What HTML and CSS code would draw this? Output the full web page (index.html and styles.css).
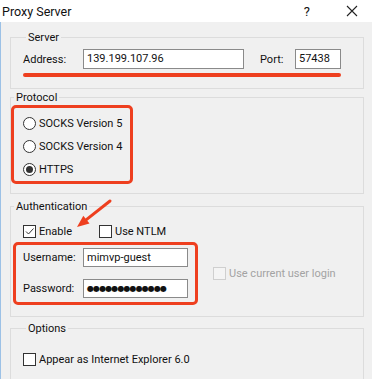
FILE: index.html
```html
<!DOCTYPE html>
<html>
<head>
<meta charset="utf-8">
<link rel="stylesheet" href="styles.css">
</head>
<body>
<div class="titlebar">
  <span class="title">Proxy Server</span>
  <span class="help">?</span>
  <svg class="close" width="12" height="12" viewBox="0 0 12 12"><path d="M1 1L11 11M11 1L1 11" stroke="#222" stroke-width="1.1" fill="none"/></svg>
</div>
<div class="window">
  <fieldset class="group server">
    <legend>Server</legend>
    <div class="row">
      <span class="lbl addr-lbl">Address:</span>
      <span class="input addr">139.199.107.96</span>
      <span class="lbl port-lbl">Port:</span>
      <span class="input port">57438</span>
    </div>
    <div class="underline"></div>
  </fieldset>

  <fieldset class="group protocol">
    <legend>Protocol</legend>
    <div class="redbox radios">
      <div class="opt"><span class="radio"></span>SOCKS Version 5</div>
      <div class="opt"><span class="radio"></span>SOCKS Version 4</div>
      <div class="opt"><span class="radio on"></span>HTTPS</div>
    </div>
  </fieldset>

  <fieldset class="group auth">
    <legend>Authentication</legend>
    <div class="checks">
      <div class="opt"><span class="check"><svg width="11" height="11" viewBox="0 0 11 11"><path d="M2 5.5L4.5 8L9.5 2.5" stroke="#333" stroke-width="1" fill="none"/></svg></span>Enable</div>
      <div class="opt ntlm"><span class="check"></span>Use NTLM</div>
    </div>
    <div class="creds-row">
      <div class="redbox creds">
        <div class="field"><span class="lbl cred-lbl">Username:</span><span class="input cred">mimvp-guest</span></div>
        <div class="field"><span class="lbl cred-lbl">Password:</span><span class="input cred pw">●●●●●●●●●●●●●</span></div>
      </div>
      <div class="opt disabled"><span class="check dis"></span>Use current user login</div>
    </div>
  </fieldset>

  <fieldset class="group options">
    <legend>Options</legend>
    <div class="opt"><span class="check"></span>Appear as Internet Explorer 6.0</div>
  </fieldset>
</div>
<svg class="arrow" width="45" height="34" viewBox="0 0 45 34"><path d="M40 3L16.4 21.6" stroke="#ee3f1f" stroke-width="3" stroke-linecap="round" fill="none"/><path d="M7 29L19.5 25.5L13.3 17.7Z" fill="#ee3f1f"/></svg>
</body>
</html>
```

FILE: styles.css
```css
* { box-sizing: border-box; }
html, body { margin: 0; padding: 0; }
body {
  width: 372px;
  height: 379px;
  overflow: hidden;
  background: #f0f0f0;
  font-family: Roboto, "Noto Sans", sans-serif;
  font-size: 11px;
  color: #111;
  position: relative;
}
.titlebar {
  height: 22px;
  background: #fff;
  display: flex;
  align-items: center;
  padding-left: 2px;
}
.title { font-size: 12.5px; color: #111; }
.help { margin-left: auto; font-size: 13px; margin-right: 36px; }
.close { margin-right: 14px; }
.window {
  border-left: 1px solid #9cc1e6;
  height: 357px;
  padding: 8px 8px 0 9px;
}
.group {
  margin: 0;
  border: 1px solid #dcdcdc;
  padding: 0;
  min-width: 0;
}
.group legend {
  padding: 1px 2px 0 2px;
  margin-left: 3px;
  line-height: 13px;
  height: 14px;
}
.lbl { display: inline-block; }
.input {
  display: inline-block;
  height: 20px;
  line-height: 17px;
  background: #fff;
  border: 1px solid #8a8a8a;
  padding: 0 3px;
  white-space: nowrap;
}
.server { padding: 5px 0 11px 12px; }
.row { display: flex; align-items: center; height: 20px; }
.addr-lbl { width: 60px; }
.addr { width: 161px; }
.port-lbl { width: 35px; margin-left: 16px; }
.port { width: 46px; }
.underline {
  margin-top: 4px;
  width: 318px;
  height: 4px;
  border-radius: 2px;
  background: #ee3f1f;
}
.redbox {
  border: 3px solid #ee3f1f;
  border-radius: 5px;
}
.protocol { margin-top: 1px; padding: 1px 0 9px 0; }
.radios {
  width: 122px;
  padding: 4px 0 0 9px;
}
.opt {
  display: flex;
  align-items: center;
  height: 23px;
  white-space: nowrap;
}
.radio {
  width: 13px;
  height: 13px;
  border: 1px solid #333;
  border-radius: 50%;
  background: #fff;
  margin-right: 3px;
  display: flex;
  align-items: center;
  justify-content: center;
}
.radio.on::after {
  content: "";
  width: 7px;
  height: 7px;
  border-radius: 50%;
  background: #333;
}
.check {
  width: 13px;
  height: 13px;
  border: 1px solid #333;
  background: #fff;
  margin-right: 3px;
  display: flex;
  align-items: center;
  justify-content: center;
}
.check.dis { border-color: #cfcfcf; background: #f4f4f4; }
.auth { margin-top: 5px; padding: 8px 0 11px 0; }
.checks { display: flex; padding-left: 12px; height: 20px; align-items: center; }
.ntlm { margin-left: 27px; }
.creds-row {
  display: flex;
  align-items: center;
  margin-top: 1px;
  padding-left: 2px;
}
.creds {
  width: 185px;
  padding: 3px 7px 4px 7px;
}
.field { display: flex; align-items: center; height: 19px; }
.field + .field { margin-top: 12px; }
.cred-lbl { width: 60px; }
.cred { width: 105px; height: 19px; }
.pw { font-family: "DejaVu Sans", sans-serif; font-size: 8px; letter-spacing: -0.9px; line-height: 17px; padding-left: 3px; }
.disabled { margin-left: 15px; color: #a3a3a3; }
.options { margin-top: 4px; padding: 13px 0 20px 12px; }
.arrow { position: absolute; left: 70px; top: 198px; }
```
